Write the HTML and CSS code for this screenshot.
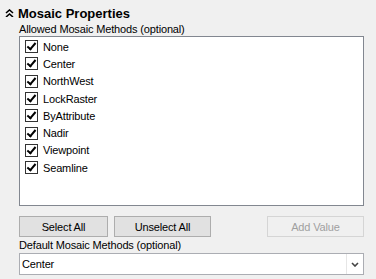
FILE: index.html
```html
<!DOCTYPE html>
<html lang="en">
<head>
    <meta charset="UTF-8">
    <title>Mosaic Properties</title>
    <link rel="stylesheet" href="styles.css">
</head>
<body>
    <div class="panel">
        <div class="section-head">
            <svg class="collapse" width="9" height="8" viewBox="0 0 9 8">
                <polyline points="1,4 4.5,1 8,4" fill="none" stroke="#000" stroke-width="1.6"/>
                <polyline points="1,8 4.5,5 8,8" fill="none" stroke="#000" stroke-width="1.6"/>
            </svg>
            <h1>Mosaic Properties</h1>
        </div>

        <div class="field">
            <div class="field-label">Allowed Mosaic Methods (optional)</div>
            <div class="checklist" id="methodList"></div>
        </div>

        <div class="buttons">
            <button class="btn" onclick="setAll(true)">Select All</button>
            <button class="btn" onclick="setAll(false)">Unselect All</button>
            <button class="btn add-btn" disabled>Add Value</button>
        </div>

        <div class="field">
            <div class="field-label">Default Mosaic Methods (optional)</div>
            <div class="combo">
                <span class="combo-value">Center</span>
                <span class="combo-arrow">
                    <svg width="8" height="5" viewBox="0 0 8 5">
                        <polyline points="1,1 4,4 7,1" fill="none" stroke="#444" stroke-width="1.6"/>
                    </svg>
                </span>
            </div>
        </div>
    </div>

    <script>
        const methods = ['None', 'Center', 'NorthWest', 'LockRaster', 'ByAttribute', 'Nadir', 'Viewpoint', 'Seamline'];
        const list = document.getElementById('methodList');

        methods.forEach(name => {
            const row = document.createElement('label');
            row.className = 'check-row';
            row.innerHTML = `<input type="checkbox" checked><span class="box"></span><span>${name}</span>`;
            list.appendChild(row);
        });

        function setAll(value) {
            list.querySelectorAll('input').forEach(cb => cb.checked = value);
        }
    </script>
</body>
</html>
```

FILE: styles.css
```css
body {
    margin: 0;
    background-color: #f0f0f0;
    font-family: "Liberation Sans", Arial, sans-serif;
    font-size: 11px;
    letter-spacing: -0.15px;
    color: #000;
}
.panel {
    display: flex;
    flex-direction: column;
    padding: 5px 12px 0 19px;
}
.section-head {
    display: flex;
    align-items: center;
    height: 16px;
    margin-left: -14px;
}
.collapse {
    margin-right: 4px;
}
.section-head h1 {
    margin: 0;
    font-size: 13px;
    font-weight: bold;
    letter-spacing: 0;
}
.field {
    display: flex;
    flex-direction: column;
}
.field-label {
    height: 14px;
    line-height: 14px;
    margin-top: 1px;
}
.checklist {
    background-color: white;
    border: 1px solid #828790;
    box-sizing: border-box;
    height: 170px;
    padding: 1px 5px;
    flex-shrink: 0;
}
.check-row {
    display: flex;
    align-items: center;
    height: 17.3px;
}
.check-row input {
    display: none;
}
.check-row .box {
    width: 11px;
    height: 11px;
    border: 1px solid #333;
    background-color: white;
    margin-right: 5px;
    position: relative;
}
.check-row input:checked + .box::after {
    content: "";
    position: absolute;
    left: 3px;
    top: 0px;
    width: 3px;
    height: 7px;
    border: solid #000;
    border-width: 0 2px 2px 0;
    transform: rotate(40deg);
}
.buttons {
    display: flex;
    gap: 6px;
    margin-top: 10px;
}
.btn {
    width: 89px;
    height: 21px;
    background-color: #e1e1e1;
    border: 1px solid #adadad;
    font-family: "Liberation Sans", Arial, sans-serif;
    font-size: 11px;
    letter-spacing: -0.15px;
    color: #000;
    padding: 0;
}
.btn + .btn {
    width: 97px;
}
.add-btn {
    margin-left: auto;
    width: 97px;
    background-color: #f0f0f0;
    border-color: #d5d5d5;
    color: #a0a0a0;
}
.combo {
    display: flex;
    align-items: center;
    height: 22px;
    background-color: white;
    border: 1px solid #abadb3;
    box-sizing: border-box;
    margin-top: 1px;
}
.combo-value {
    flex: 1;
    padding-left: 2px;
}
.combo-arrow {
    display: flex;
    align-items: center;
    justify-content: center;
    width: 16px;
    height: 100%;
    border-left: 1px solid #e6e6e6;
}
```
